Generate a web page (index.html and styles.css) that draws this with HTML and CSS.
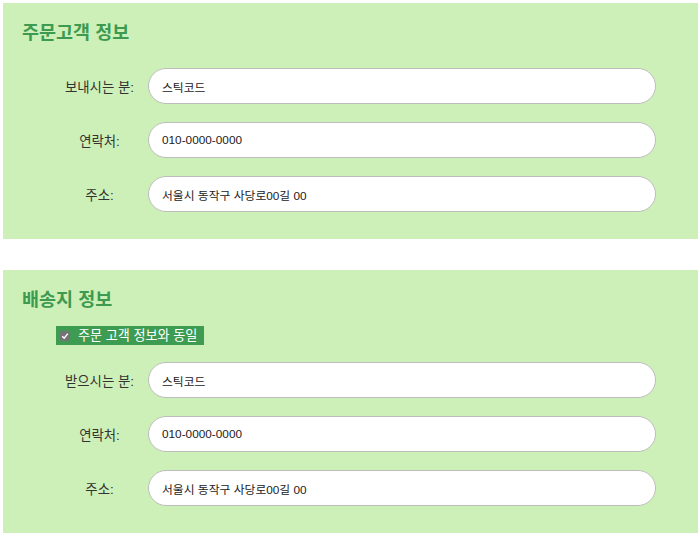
FILE: index.html
```html
<!DOCTYPE html>
<html lang="ko">
<head>
<meta charset="utf-8">
<link rel="stylesheet" href="styles.css">
</head>
<body>
<section class="box">
  <h2 class="title">주문고객 정보</h2>
  <div class="rows">
    <div class="row"><span class="label">보내시는 분:</span><div class="field">스틱코드</div></div>
    <div class="row"><span class="label">연락처:</span><div class="field">010-0000-0000</div></div>
    <div class="row"><span class="label">주소:</span><div class="field">서울시 동작구 사당로00길 00</div></div>
  </div>
</section>
<section class="box second">
  <h2 class="title">배송지 정보</h2>
  <div class="same">
    <span class="check"><svg width="8" height="8" viewBox="0 0 8 8"><path d="M1.2 4.2 L3.2 6.2 L6.8 1.6" fill="none" stroke="#fff" stroke-width="1.5"/></svg></span>
    <span class="same-text">주문 고객 정보와 동일</span>
  </div>
  <div class="rows">
    <div class="row"><span class="label">받으시는 분:</span><div class="field">스틱코드</div></div>
    <div class="row"><span class="label">연락처:</span><div class="field">010-0000-0000</div></div>
    <div class="row"><span class="label">주소:</span><div class="field">서울시 동작구 사당로00길 00</div></div>
  </div>
</section>
</body>
</html>
```
FILE: styles.css
```css
html, body {
  margin: 0;
  padding: 0;
  background: #fff;
}
body {
  padding: 3px 2px 0 3px;
  font-family: "Liberation Sans", "Noto Sans CJK KR", sans-serif;
}
.box {
  background: #cdf0b8;
  padding: 18px 0 27px 0;
}
.second {
  margin-top: 31px;
}
.title {
  margin: 0 0 0 19px;
  font-size: 18.5px;
  line-height: 24px;
  font-weight: bold;
  color: #3d9a50;
}
.rows {
  display: flex;
  flex-direction: column;
  gap: 18px;
  margin-top: 23px;
}
.second .rows {
  margin-top: 17px;
}
.row {
  display: flex;
  align-items: center;
  padding-left: 51px;
}
.label {
  width: 91px;
  text-align: center;
  font-size: 13.4px;
  color: #333;
  margin-right: 3px;
}
.field {
  box-sizing: border-box;
  width: 508px;
  height: 36px;
  border: 1px solid #bdbdbd;
  border-radius: 18px;
  background: #fff;
  padding-left: 13px;
  display: flex;
  align-items: center;
  font-size: 11.8px;
  color: #222;
}
.same {
  display: flex;
  align-items: center;
  width: 148px;
  height: 19px;
  box-sizing: border-box;
  margin: 14px 0 0 53px;
  background: #3d9b52;
  padding-left: 4px;
}
.check {
  width: 10px;
  height: 10px;
  border-radius: 2px;
  background: #737373;
  display: flex;
  align-items: center;
  justify-content: center;
  margin-right: 8px;
}
.same-text {
  color: #fff;
  font-size: 13.1px;
  line-height: 19px;
}
```
